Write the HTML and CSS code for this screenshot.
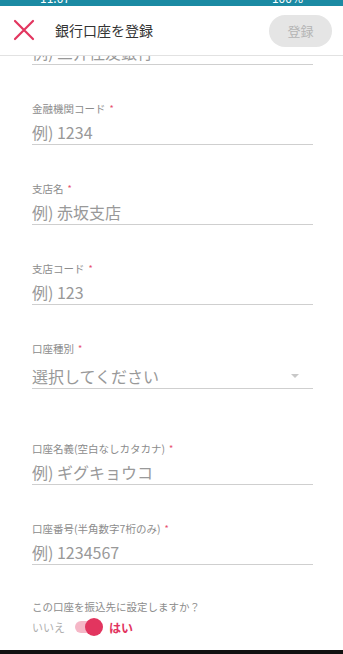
FILE: index.html
```html
<!DOCTYPE html>
<html lang="ja">
<head>
  <meta charset="UTF-8" />
  <meta name="viewport" content="width=device-width, initial-scale=1.0"/>
  <title>銀行口座を登録</title>
  <link rel="stylesheet" href="styles.css">
</head>
<body>
  <div class="screen">
    <!-- status bar (cut off) -->
    <div class="statusbar">
      <span>11:07</span>
      <span>100%</span>
    </div>

    <!-- header -->
    <div class="header">
      <svg class="close" width="22" height="22" viewBox="0 0 22 22">
        <path d="M2 2 L20 20 M20 2 L2 20" stroke="#e2355f" stroke-width="2.2" fill="none" stroke-linecap="round"/>
      </svg>
      <div class="title">銀行口座を登録</div>
      <button class="submit">登録</button>
    </div>

    <div class="content">
      <!-- scrolled under the header -->
      <div class="field first">
        <div class="input">例) 三井住友銀行</div>
      </div>

      <div class="field">
        <label class="label">金融機関コード<span class="req">*</span></label>
        <div class="input">例) 1234</div>
      </div>

      <div class="field">
        <label class="label">支店名<span class="req">*</span></label>
        <div class="input">例) 赤坂支店</div>
      </div>

      <div class="field">
        <label class="label">支店コード<span class="req">*</span></label>
        <div class="input">例) 123</div>
      </div>

      <div class="field select-field">
        <label class="label">口座種別<span class="req">*</span></label>
        <div class="input select">
          <span>選択してください</span>
          <span class="arrow"></span>
        </div>
      </div>

      <div class="field after-select">
        <label class="label">口座名義(空白なしカタカナ)<span class="req">*</span></label>
        <div class="input">例) ギグキョウコ</div>
      </div>

      <div class="field last">
        <label class="label">口座番号(半角数字7桁のみ)<span class="req">*</span></label>
        <div class="input">例) 1234567</div>
      </div>

      <div class="question">この口座を振込先に設定しますか？</div>
      <div class="switch-row">
        <span class="no">いいえ</span>
        <span class="switch"><span class="knob"></span></span>
        <span class="yes">はい</span>
      </div>
    </div>

    <div class="navbar"></div>
  </div>
</body>
</html>
```

FILE: styles.css
```css
* {
  box-sizing: border-box;
}
body {
  margin: 0;
  font-family: "Noto Sans CJK JP", "Noto Sans", sans-serif;
  background: #fff;
  color: #333;
}
.screen {
  height: 654px;
  display: flex;
  flex-direction: column;
  overflow: hidden;
}
.statusbar {
  height: 6px;
  background: #1b8aa3;
  color: #fff;
  font-size: 12px;
  line-height: 12px;
  display: flex;
  justify-content: space-between;
  padding: 0 40px;
  overflow: hidden;
}
.statusbar span {
  margin-top: -8px;
}
.header {
  height: 50px;
  flex: none;
  display: flex;
  align-items: center;
  padding: 0 11px 0 13px;
  border-bottom: 1px solid #e2e2e2;
  background: #fff;
}
.close {
  display: block;
  margin-top: -1px;
}
.title {
  margin-left: 20px;
  font-size: 14px;
  color: #333;
  line-height: 1.5;
}
.submit {
  margin-left: auto;
  width: 63px;
  height: 32px;
  border: none;
  border-radius: 16px;
  background: #e5e5e5;
  color: #b4b4b4;
  font-family: inherit;
  font-size: 13px;
  padding: 0;
}
.content {
  flex: 1;
  overflow: hidden;
  padding: 0 30px 0 32px;
}
.field {
  margin-top: 37px;
}
.field.first {
  margin-top: -16px;
}
.field.after-select {
  margin-top: 53px;
}
.field.last {
  margin-top: 37px;
}
.label {
  display: block;
  font-size: 10.5px;
  line-height: 14px;
  color: #8c8c8c;
  margin-bottom: 4px;
}
.req {
  color: #e8506e;
  font-size: 9px;
  margin-left: 4px;
  vertical-align: top;
}
.input {
  font-size: 16px;
  line-height: 24px;
  color: #999;
  border-bottom: 1px solid #cfcfcf;
}
.select-field .label {
  margin-bottom: 8px;
}
.select {
  display: flex;
  align-items: center;
  justify-content: space-between;
}
.arrow {
  width: 0;
  height: 0;
  border-left: 4px solid transparent;
  border-right: 4px solid transparent;
  border-top: 4px solid #c8c8c8;
  margin-right: 14px;
}
.question {
  margin-top: 35px;
  font-size: 10.5px;
  line-height: 14px;
  color: #8c8c8c;
}
.switch-row {
  display: flex;
  align-items: center;
  height: 22px;
  margin-top: 2px;
}
.no {
  font-size: 11px;
  color: #b0b0b0;
}
.switch {
  position: relative;
  width: 24px;
  height: 12px;
  border-radius: 6px;
  background: #f5b7c7;
  margin-left: 10px;
}
.knob {
  position: absolute;
  right: -4px;
  top: -3px;
  width: 18px;
  height: 18px;
  border-radius: 50%;
  background: #e2355f;
}
.yes {
  font-size: 12px;
  color: #e2355f;
  margin-left: 10px;
  font-weight: bold;
}
.navbar {
  height: 4px;
  background: #111;
  flex: none;
}
```
